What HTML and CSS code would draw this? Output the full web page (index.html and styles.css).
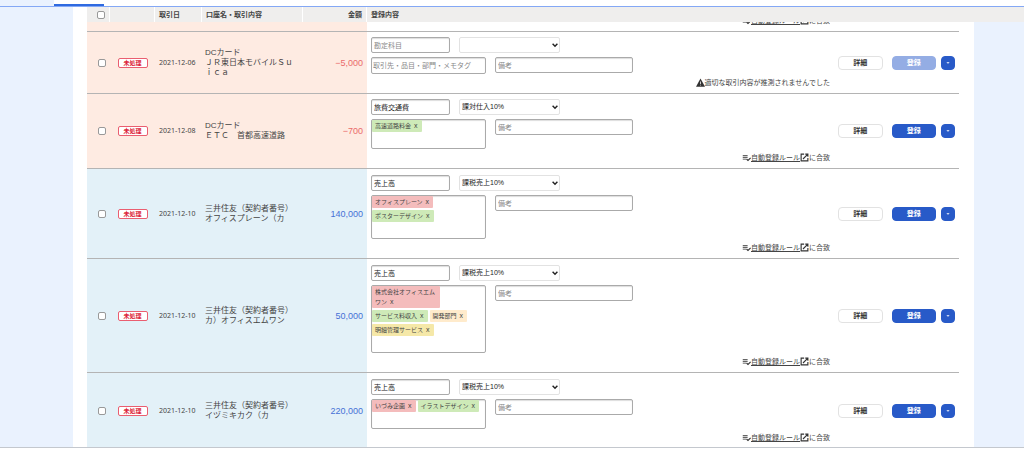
FILE: index.html
```
<!DOCTYPE html>
<html lang="ja">
<head>
<meta charset="utf-8">
<title>自動で経理</title>
<link rel="stylesheet" href="styles.css">
</head>
<body>
<svg class="sprite" aria-hidden="true">
  <symbol id="rule" viewBox="0 0 24 24"><path d="M2 5h13v2.5H2zM2 10h13v2.5H2zM2 15h9v2.5H2z" fill="currentColor"/><path d="M12 16l4 4 7-7" fill="none" stroke="currentColor" stroke-width="3"/></symbol>
  <symbol id="open" viewBox="0 0 24 24"><path d="M11 3H3v18h18v-8M14 3h7v7M21 3L8 16" fill="none" stroke="currentColor" stroke-width="3"/></symbol>
  <symbol id="warn" viewBox="0 0 24 24"><path d="M12 1L0 23h24z" fill="currentColor"/><path d="M11 9h2v7h-2zM11 18h2v2h-2z" fill="#fff"/></symbol>
  <symbol id="chevron" viewBox="0 0 10 10"><path d="M1 3l4 4 4-4" fill="none" stroke="currentColor" stroke-width="2.4"/></symbol>
  <symbol id="caret" viewBox="0 0 10 10"><path d="M1 3h8L5 7z" fill="currentColor"/></symbol>
</svg>
<nav class="tabs"><span class="tabs-active"></span></nav>
<main class="scroller">
<table class="deals">
  <colgroup><col class="c-check"><col class="c-status"><col class="c-date"><col class="c-account"><col class="c-amount"><col><col class="c-actions"><col class="c-gutter"></colgroup>
  <thead>
    <tr>
      <th class="center"><input type="checkbox" class="check" aria-label="すべて選択"></th><th></th><th>取引日</th><th>口座名・取引内容</th><th class="right">金額</th><th colspan="3">登録内容</th>
    </tr>
  </thead>
  <tbody>
    <tr class="expense partial">
      <td></td><td></td><td></td><td></td><td></td>
      <td class="entry"><div class="clip"><p class="note"><svg class="icon"><use href="#rule"/></svg><a href="#rules">自動登録ルール</a><svg class="icon"><use href="#open"/></svg>に合致</p></div></td>
      <td></td><td class="gutter"></td>
    </tr>
    <tr class="expense">
      <td class="center"><input type="checkbox" class="check" aria-label="選択"></td>
      <td><span class="badge">未処理</span></td>
      <td class="date">2021-12-06</td>
      <td class="account">DCカード<br>ＪＲ東日本モバイルＳｕｉｃａ</td>
      <td class="amount">−5,000</td>
      <td class="entry">
        <div class="fields">
          <input class="field subject" placeholder="勘定科目" aria-label="勘定科目">
          <span class="picker"><select aria-label="税区分"><option></option></select><svg class="chevron"><use href="#chevron"/></svg></span>
        </div>
        <div class="fields">
          <input class="field tagbox" placeholder="取引先・品目・部門・メモタグ" aria-label="タグ">
          <input class="field memo" placeholder="備考" aria-label="備考">
        </div>
        <p class="note"><svg class="icon"><use href="#warn"/></svg>適切な取引内容が推測されませんでした</p>
      </td>
      <td><div class="actions"><button class="btn">詳細</button><button class="btn primary" disabled>登録</button><button class="btn primary more" aria-label="その他"><svg class="caret"><use href="#caret"/></svg></button></div></td>
      <td class="gutter"></td>
    </tr>
    <tr class="expense">
      <td class="center"><input type="checkbox" class="check" aria-label="選択"></td>
      <td><span class="badge">未処理</span></td>
      <td class="date">2021-12-08</td>
      <td class="account">DCカード<br>ＥＴＣ　首都高速道路</td>
      <td class="amount">−700</td>
      <td class="entry">
        <div class="fields">
          <input class="field subject" value="旅費交通費" aria-label="勘定科目">
          <span class="picker"><select aria-label="税区分"><option>課対仕入10%</option></select><svg class="chevron"><use href="#chevron"/></svg></span>
        </div>
        <div class="fields">
          <div class="tagbox filled"><span class="tag item">高速道路料金<button>x</button></span><input aria-label="タグ"></div>
          <input class="field memo" placeholder="備考" aria-label="備考">
        </div>
        <p class="note"><svg class="icon"><use href="#rule"/></svg><a href="#rules">自動登録ルール</a><svg class="icon"><use href="#open"/></svg>に合致</p>
      </td>
      <td><div class="actions"><button class="btn">詳細</button><button class="btn primary">登録</button><button class="btn primary more" aria-label="その他"><svg class="caret"><use href="#caret"/></svg></button></div></td>
      <td class="gutter"></td>
    </tr>
    <tr class="income">
      <td class="center"><input type="checkbox" class="check" aria-label="選択"></td>
      <td><span class="badge">未処理</span></td>
      <td class="date">2021-12-10</td>
      <td class="account">三井住友（契約者番号）<br>オフィスプレーン（カ</td>
      <td class="amount">140,000</td>
      <td class="entry">
        <div class="fields">
          <input class="field subject" value="売上高" aria-label="勘定科目">
          <span class="picker"><select aria-label="税区分"><option>課税売上10%</option></select><svg class="chevron"><use href="#chevron"/></svg></span>
        </div>
        <div class="fields">
          <div class="tagbox filled"><span class="tag partner">オフィスプレーン<button>x</button></span><span class="tag item">ポスターデザイン<button>x</button></span><input aria-label="タグ"></div>
          <input class="field memo" placeholder="備考" aria-label="備考">
        </div>
        <p class="note"><svg class="icon"><use href="#rule"/></svg><a href="#rules">自動登録ルール</a><svg class="icon"><use href="#open"/></svg>に合致</p>
      </td>
      <td><div class="actions"><button class="btn">詳細</button><button class="btn primary">登録</button><button class="btn primary more" aria-label="その他"><svg class="caret"><use href="#caret"/></svg></button></div></td>
      <td class="gutter"></td>
    </tr>
    <tr class="income">
      <td class="center"><input type="checkbox" class="check" aria-label="選択"></td>
      <td><span class="badge">未処理</span></td>
      <td class="date">2021-12-10</td>
      <td class="account">三井住友（契約者番号）<br>カ）オフィスエムワン</td>
      <td class="amount">50,000</td>
      <td class="entry">
        <div class="fields">
          <input class="field subject" value="売上高" aria-label="勘定科目">
          <span class="picker"><select aria-label="税区分"><option>課税売上10%</option></select><svg class="chevron"><use href="#chevron"/></svg></span>
        </div>
        <div class="fields">
          <div class="tagbox filled"><span class="tag partner">株式会社オフィスエムワン<button>x</button></span><span class="tag item">サービス料収入<button>x</button></span><span class="tag section">開発部門<button>x</button></span><span class="tag memo-tag">明細管理サービス<button>x</button></span><input aria-label="タグ"></div>
          <input class="field memo" placeholder="備考" aria-label="備考">
        </div>
        <p class="note"><svg class="icon"><use href="#rule"/></svg><a href="#rules">自動登録ルール</a><svg class="icon"><use href="#open"/></svg>に合致</p>
      </td>
      <td><div class="actions"><button class="btn">詳細</button><button class="btn primary">登録</button><button class="btn primary more" aria-label="その他"><svg class="caret"><use href="#caret"/></svg></button></div></td>
      <td class="gutter"></td>
    </tr>
    <tr class="income">
      <td class="center"><input type="checkbox" class="check" aria-label="選択"></td>
      <td><span class="badge">未処理</span></td>
      <td class="date">2021-12-10</td>
      <td class="account">三井住友（契約者番号）<br>イヅミキカク（カ</td>
      <td class="amount">220,000</td>
      <td class="entry">
        <div class="fields">
          <input class="field subject" value="売上高" aria-label="勘定科目">
          <span class="picker"><select aria-label="税区分"><option>課税売上10%</option></select><svg class="chevron"><use href="#chevron"/></svg></span>
        </div>
        <div class="fields">
          <div class="tagbox filled"><span class="tag partner">いづみ企画<button>x</button></span><span class="tag item">イラストデザイン<button>x</button></span><input aria-label="タグ"></div>
          <input class="field memo" placeholder="備考" aria-label="備考">
        </div>
        <p class="note"><svg class="icon"><use href="#rule"/></svg><a href="#rules">自動登録ルール</a><svg class="icon"><use href="#open"/></svg>に合致</p>
      </td>
      <td><div class="actions"><button class="btn">詳細</button><button class="btn primary">登録</button><button class="btn primary more" aria-label="その他"><svg class="caret"><use href="#caret"/></svg></button></div></td>
      <td class="gutter"></td>
    </tr>
  </tbody>
</table>
</main>
</body>
</html>
```

FILE: styles.css
```
* { box-sizing: border-box; }

body {
  margin: 0;
  height: 100vh;
  padding-bottom: 4px;
  display: flex;
  flex-direction: column;
  overflow: hidden;
  background: #fff;
  color: #444;
  font: 7px/10px "Liberation Sans", "Noto Sans CJK JP", sans-serif;
}

input, select, button { font: inherit; color: inherit; margin: 0; }
.sprite { display: none; }

.tabs {
  flex: none;
  display: flex;
  align-items: flex-end;
  height: 7px;
  padding-left: 54px;
  border-bottom: 1px solid #84a8f5;
  background: linear-gradient(to right, #eaf2fe 54px, #fff 54px);
}
.tabs-active { width: 50px; height: 2px; background: #2f6ae0; }

.scroller {
  flex: 1;
  min-height: 0;
  overflow: hidden;
  padding-left: 87px;
  border-bottom: 1px solid #c4c8ce;
  background: linear-gradient(to right, #eaf2fe 73px, #fff 73px, #fff calc(100% - 50px), #eaf2fe calc(100% - 50px));
}

.deals { width: 100%; table-layout: fixed; border-collapse: separate; border-spacing: 0; }
.c-check { width: 23px; }
.c-status { width: 45px; }
.c-date { width: 47px; }
.c-account { width: 101px; }
.c-amount { width: 64px; }
.c-actions { width: 125px; }
.c-gutter { width: 65px; }

th {
  height: 15px;
  padding: 0 4px;
  background: #efeeed;
  border-right: 1px solid #fff;
  text-align: left;
  color: #444;
}
th:last-child { border-right: 0; }
td { padding: 0 4px; border-bottom: 1px solid #b4b4b4; vertical-align: middle; }
.center { text-align: center; }
th.center, td.center { padding: 0 0 0 6px; }
.right { text-align: right; }
td.gutter { border-bottom: 0; }
td.date { font-family: "Noto Sans", sans-serif; }
td.account { padding: 0 3px; font-size: 8px; }
td.amount { text-align: right; font-size: 9px; }

.expense td:nth-child(-n+5) { background: #feebe2; }
.income td:nth-child(-n+5) { background: #e3f1f8; }
.expense td.amount { color: #ea6a6a; }
.income td.amount { color: #4570d6; }

.check {
  appearance: none;
  display: block;
  width: 8px;
  height: 8px;
  margin: 0 auto;
  border: 1px solid #999;
  border-radius: 2px;
  background: #fff;
}
.badge {
  display: block;
  width: 30px;
  height: 10px;
  margin: 0 auto;
  border: 1px solid #ea5e70;
  border-radius: 2px;
  background: #fff;
  color: #dc1e38;
  font-size: 6px;
  font-weight: bold;
  line-height: 8px;
  text-align: center;
}

td.entry { padding: 5px 4px 2px 4px; }
.income td.entry { padding-top: 6px; }
.fields { display: flex; align-items: flex-start; gap: 9px; }
.fields + .fields { margin-top: 4px; }
.field {
  height: 16px;
  padding: 0 2px;
  border: 1px solid #aaa;
  border-radius: 2px;
  background: #fff;
  box-shadow: inset 0 1px 1px #ddd;
}
.picker { height: 16px; }
.subject { width: 79px; color: #222; }
.memo { width: 138px; }
input.tagbox { height: 17px; padding: 0 1px; }
.field::placeholder { color: #888; opacity: 1; }

.picker { position: relative; width: 101px; color: #222; }
.picker select {
  appearance: none;
  display: block;
  width: 100%;
  height: 100%;
  padding: 0 2px;
  border: 1px solid #e2e2e2;
  border-radius: 2px;
  background: #fff;
}
.chevron { position: absolute; right: 2px; top: 5px; width: 6px; height: 6px; pointer-events: none; }

.tagbox { width: 115px; }
.filled {
  display: flex;
  flex-wrap: wrap;
  gap: 2px;
  border: 1px solid #aaa;
  border-radius: 2px;
  box-shadow: inset 0 1px 1px #ddd;
}
.filled input { flex: 0 0 100%; height: 14px; padding: 0; border: 0; background: none; outline: 0; }
.tag { max-width: 68px; padding: 1px 3px; border-radius: 1px; font-size: 6px; }
.tag button { margin-left: 2px; padding: 0 1px; border: 0; background: none; font-size: 7px; line-height: 8px; }
.partner { background: #f4bcbc; }
.item { background: #ceeab8; }
.section { background: #ffebcc; }
.memo-tag { background: #f5e8a8; }

.note { display: flex; align-items: center; justify-content: flex-end; height: 17px; margin: 0; }
.note a { color: inherit; text-decoration: underline; text-underline-offset: 1px; }
.icon { width: 9px; height: 9px; color: #333; }

.partial td.entry { padding: 0 4px; }
.clip { display: flex; flex-direction: column; justify-content: flex-end; height: 9px; padding-bottom: 2px; overflow: hidden; }
.clip .note { flex: none; }

.actions { display: flex; align-items: center; }
.btn {
  width: 45px;
  height: 14px;
  padding: 0;
  border: 1px solid #e2e2e2;
  border-radius: 4px;
  background: #fff;
  color: #333;
  font-weight: bold;
  line-height: 12px;
}
.btn + .btn { margin-left: 9px; }
.primary { border-color: #285ac8; background: #285ac8; color: #fff; }
.primary:disabled { border-color: #94ade4; background: #94ade4; }
.btn + .more { display: grid; place-items: center; width: 14px; margin-left: 5px; }
.caret { width: 4px; height: 4px; }
```
